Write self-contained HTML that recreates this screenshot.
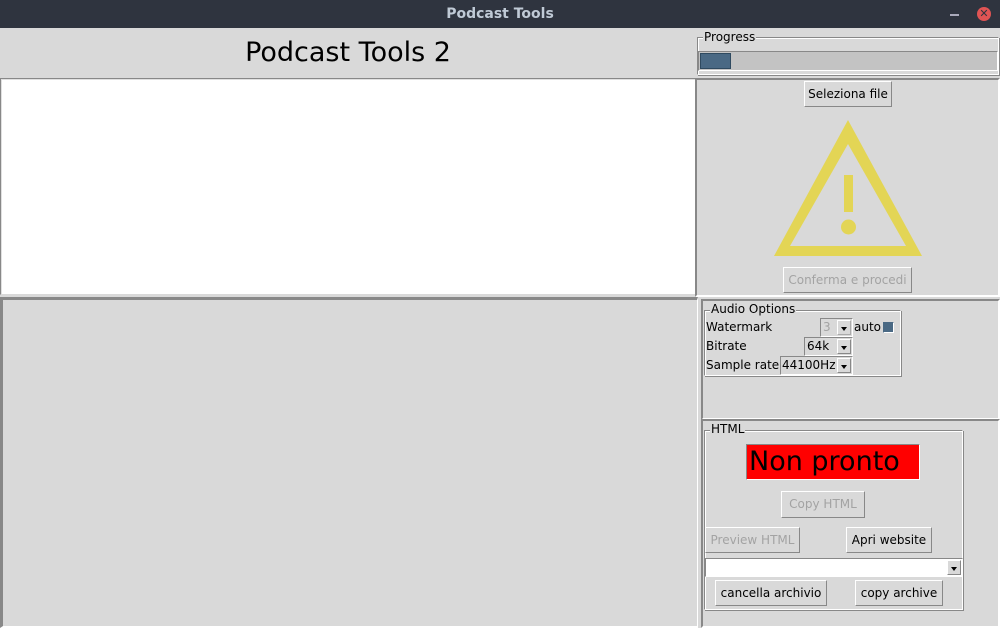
<!DOCTYPE html>
<html><head><meta charset="utf-8"><style>
*{margin:0;padding:0;box-sizing:border-box}
body{width:1000px;height:628px;background:#d9d9d9;position:relative;overflow:hidden;font-family:"DejaVu Sans","Liberation Sans",sans-serif;font-size:12px;color:#000}
.a{position:absolute}
.btn{position:absolute;border:1px solid;border-color:#fff #888 #888 #fff;background:#d9d9d9;text-align:center;font-size:12px}
.dis{color:#a3a3a3}
.lf{position:absolute;border:1px solid;border-color:#888 #fff #fff #888;box-shadow:inset 1px 1px 0 #fff, 1px 1px 0 #888}
.lbl{position:absolute;background:#d9d9d9;padding:0 1px;line-height:14px}
.cb{position:absolute;border:1px solid;border-color:#888 #fff #fff #888;background:#d9d9d9}
.arr{position:absolute;right:1px;top:1px;bottom:1px;width:14px;border:1px solid;border-color:#fff #888 #888 #fff}
.arr:after{content:"";position:absolute;left:3px;bottom:3px;border-left:3px solid transparent;border-right:3px solid transparent;border-top:4px solid #000}
</style></head><body>
<div class="a" style="left:0;top:0;width:1000px;height:28px;background:#2f343f"></div>
<div class="a" style="left:0;top:6px;width:1000px;text-align:center;color:#c0cad6;font-weight:bold;font-size:14px;font-family:'DejaVu Sans',sans-serif">Podcast Tools</div>
<div class="a" style="left:950px;top:14px;width:9px;height:2px;background:#aab"></div>
<div class="a" style="left:977px;top:7px;width:14px;height:14px;border-radius:50%;background:#e05454;color:#2f343f;font-size:11px;line-height:14px;text-align:center;font-weight:bold">✕</div>

<div class="a" style="left:0;top:36px;width:696px;text-align:center;font-size:27px;line-height:34px">Podcast Tools 2</div>
<div class="a" style="left:0;top:78px;width:696px;height:217px;background:#fff;border:1px solid;border-color:#888 #d9d9d9 #d9d9d9 #888;box-shadow:inset 1px 1px 0 #e0e0e0"></div>
<div class="a" style="left:0;top:297px;width:698px;height:331px;border-top:3px solid #888;border-left:3px solid #888;border-right:1px solid #fff;border-bottom:2px solid #fff"></div>

<div class="lf" style="left:697px;top:37px;width:302px;height:38px"></div>
<div class="lbl" style="left:703px;top:30px">Progress</div>
<div class="a" style="left:698px;top:51px;width:300px;height:20px;background:#c3c3c3;border:1px solid;border-color:#888 #fff #fff #888"></div>
<div class="a" style="left:700px;top:53px;width:31px;height:16px;background:#4a6984;border:1px solid #2f4a60"></div>

<div class="a" style="left:695px;top:78px;width:305px;height:219px;border:2px solid #888;border-right-color:#fff;border-bottom-color:#fff"></div>
<div class="btn" style="left:804px;top:81px;width:88px;height:26px;line-height:24px">Seleziona file</div>
<svg class="a" style="left:770px;top:116px" width="160" height="144"><path d="M78 4 L152 140 L4 140 Z M78 28 L20 130 L136 130 Z" fill="#e3d555" fill-rule="evenodd"/><rect x="74" y="59" width="9" height="37" fill="#e3d555"/><circle cx="78.5" cy="111" r="7.5" fill="#e3d555"/></svg>
<div class="btn dis" style="left:783px;top:267px;width:129px;height:26px;line-height:24px">Conferma e procedi</div>

<div class="a" style="left:701px;top:299px;width:299px;height:121px;border:2px solid #888;border-right-color:#fff;border-bottom-color:#fff"></div>
<div class="lf" style="left:704px;top:310px;width:197px;height:66px"></div>
<div class="lbl" style="left:710px;top:302px">Audio Options</div>
<div class="a" style="left:706px;top:320px">Watermark</div>
<div class="a" style="left:706px;top:339px">Bitrate</div>
<div class="a" style="left:706px;top:358px">Sample rate</div>
<div class="cb dis" style="left:820px;top:318px;width:33px;height:19px;padding-left:2px;line-height:17px">3<div class="arr" style="border-color:#fff #aaa #aaa #fff"></div></div>
<div class="a" style="left:854px;top:320px">auto</div>
<div class="a" style="left:883px;top:322px;width:11px;height:11px;background:#4a6984;border:1px solid;border-color:#4a6984 #fff #fff #4a6984"></div>
<div class="cb" style="left:804px;top:337px;width:49px;height:19px;padding-left:2px;line-height:17px">64k<div class="arr"></div></div>
<div class="cb" style="left:780px;top:356px;width:73px;height:19px;padding-left:1px;line-height:17px">44100Hz<div class="arr"></div></div>

<div class="a" style="left:701px;top:419px;width:299px;height:209px;border:2px solid #888;border-right-color:#fff;border-bottom-color:#fff"></div>
<div class="lf" style="left:704px;top:430px;width:259px;height:180px"></div>
<div class="lbl" style="left:710px;top:422px">HTML</div>
<div class="a" style="left:746px;top:444px;width:174px;height:36px;background:#f00;border:1px solid;border-color:#888 #fff #fff #888;font-size:27px;line-height:33px;padding-left:2px">Non pronto</div>
<div class="btn dis" style="left:781px;top:491px;width:84px;height:27px;line-height:25px">Copy HTML</div>
<div class="btn dis" style="left:705px;top:527px;width:95px;height:26px;line-height:24px">Preview HTML</div>
<div class="btn" style="left:846px;top:527px;width:86px;height:26px;line-height:24px">Apri website</div>
<div class="a" style="left:705px;top:558px;width:258px;height:19px;background:#fff;border:1px solid;border-color:#888 #fff #fff #888"><div class="arr" style="background:#d9d9d9"></div></div>
<div class="btn" style="left:715px;top:580px;width:112px;height:26px;line-height:24px">cancella archivio</div>
<div class="btn" style="left:855px;top:580px;width:88px;height:26px;line-height:24px">copy archive</div>
</body></html>
